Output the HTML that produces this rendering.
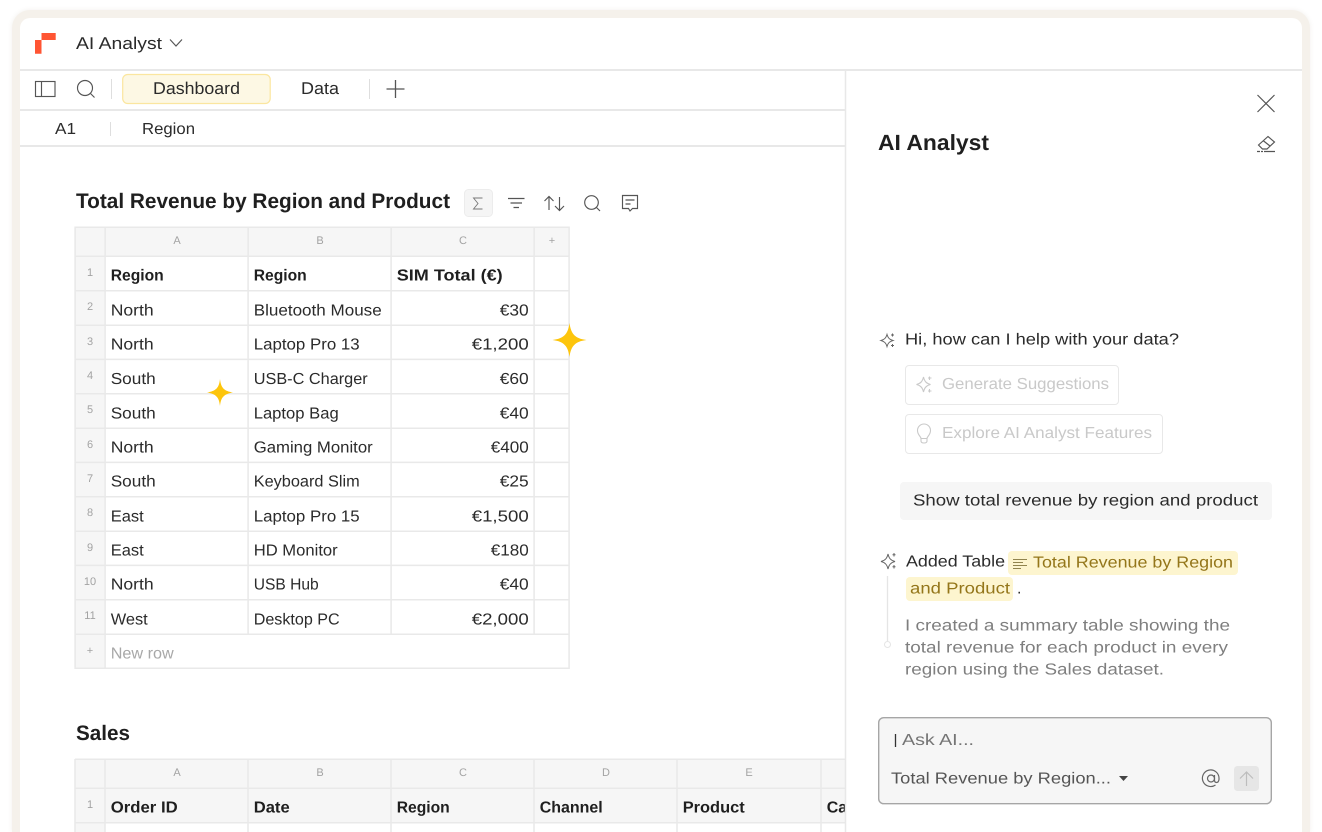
<!DOCTYPE html>
<html><head><meta charset="utf-8">
<style>
html,body{margin:0;padding:0;width:1322px;height:832px;overflow:hidden;background:#fff}
.wrap{position:relative;width:1322px;height:832px;overflow:hidden;background:#fff}
.ring{position:absolute;left:12px;top:10px;width:1298px;height:822px;background:#f5f1eb;border-radius:18px 18px 0 0;box-shadow:0 0 5px rgba(120,100,70,.10)}
svg{position:absolute;left:0;top:0;display:block}
text{font-family:"Liberation Sans",sans-serif;font-size:16px;fill:#2b2b2b;text-rendering:geometricPrecision}
.b{font-weight:700;fill:#1f1f1f}
.h{font-size:11px;fill:#a3a3a3;text-anchor:middle}
.n{font-size:11px;fill:#a3a3a3;text-anchor:middle}
.t{font-size:21px;font-weight:700;fill:#1f1f1f}
.g{fill:#c9c9c9;font-size:16px}
.p{fill:#7f7f7f}
.y{fill:#94761a}
.l{stroke:#e9e9e9;stroke-width:1.500;fill:none}
.i{stroke:#555;stroke-width:1.150;fill:none}
</style></head><body>
<div class="wrap">
<div class="ring"></div>
<svg width="1322" height="832" viewBox="0 0 1322 832">
<path d="M20 832V28a10 10 0 0 1 10-10H1292a10 10 0 0 1 10 10V832Z" fill="#fff"/>

<!-- top bars -->
<path d="M35 40h6.500v13.700h-6.500zM41.500 33h14.200v7h-14.200z" fill="#ff5533"/>
<text x="76" y="49" style="font-size:17px" textLength="86" lengthAdjust="spacingAndGlyphs">AI Analyst</text>
<path class="i" stroke-width="1" d="M170 39.500l6 6.500 6-6.500"/>
<path d="M20 70H1302" stroke="#e8e8e8" stroke-width="2"/>
<path d="M20 110H845M20 146H845" stroke="#e8e8e8" stroke-width="2"/>

<rect class="i" x="35.500" y="81.500" width="19.500" height="15"/>
<path class="i" d="M41.500 81.500V96.500"/>
<circle class="i" cx="85" cy="88" r="7.500"/>
<path class="i" d="M90.500 93.500L94.500 97.500"/>
<path d="M111.500 79V99M369.500 79V99M110.500 122V136" stroke="#dedede" stroke-width="1"/>
<rect x="122.700" y="74.500" width="147.500" height="29" rx="5" fill="#fdf8e4" stroke="#fbe69f" stroke-width="1.200"/>
<text x="153" y="94" style="font-size:17px" textLength="87" lengthAdjust="spacingAndGlyphs">Dashboard</text>
<text x="301" y="94" style="font-size:17px" textLength="38" lengthAdjust="spacingAndGlyphs">Data</text>
<path d="M386.500 89H404.500M395.500 80V98" stroke="#555" stroke-width="1.300"/>
<text x="55" y="134" textLength="21" lengthAdjust="spacingAndGlyphs">A1</text>
<text x="142" y="134" textLength="53" lengthAdjust="spacingAndGlyphs">Region</text>

<!-- title toolbar -->
<text class="t" x="76" y="208" textLength="374" lengthAdjust="spacingAndGlyphs">Total Revenue by Region and Product</text>
<rect x="464.500" y="189.500" width="28" height="27" rx="4" fill="#f5f5f5" stroke="#ececec"/>
<path d="M482.500 198h-9l4.500 5.500-4.500 5.500h9" fill="none" stroke="#777" stroke-width=".9"/>
<path class="i" d="M508 198.500h16.500M510.500 203h11.500M513.500 207.500h5.500"/>
<path class="i" d="M549 210V196.500M544.500 201l4.500-4.500 4.500 4.500M559.500 197V210.500M555 206l4.500 4.500 4.500-4.500"/>
<circle class="i" cx="591.500" cy="202.500" r="6.800"/>
<path class="i" d="M596.500 207.500L600 211"/>
<path class="i" d="M622.500 195.500h15v13h-5l-2.500 2.500-1.500-2.500h-6zM625.500 200h9M625.500 204h5"/>

<!-- table 1 -->
<g transform="translate(-.4,-.3)">
<rect x="75" y="227" width="494" height="29" fill="#f6f6f6"/>
<rect x="75" y="256" width="30" height="412" fill="#f6f6f6"/>
<path class="l" d="M75.500 227.500H569.500V668.500H75.500ZM105.500 227V668M248.500 227V634M391.500 227V634M534.500 227V634M75 256.500H569M75 291H569M75 325.500H569M75 359.700H569M75 394H569M75 428.500H569M75 462.700H569M75 497H569M75 531.500H569M75 565.700H569M75 600H569M75 634.500H569"/>
</g>
<text class="h" x="177" y="244">A</text><text class="h" x="320" y="244">B</text><text class="h" x="463" y="244">C</text><text class="h" x="552" y="244">+</text>
<text class="n" x="90" y="276">1</text><text class="n" x="90" y="310">2</text><text class="n" x="90" y="345">3</text><text class="n" x="90" y="379">4</text><text class="n" x="90" y="413">5</text><text class="n" x="90" y="448">6</text><text class="n" x="90" y="482">7</text><text class="n" x="90" y="516">8</text><text class="n" x="90" y="551">9</text><text class="n" x="90" y="585">10</text><text class="n" x="90" y="619">11</text><text class="n" x="90" y="654">+</text>

<g transform="translate(-.3,-.6)">
<text class="b" x="111" y="281" textLength="53" lengthAdjust="spacingAndGlyphs">Region</text><text class="b" x="254" y="281" textLength="53" lengthAdjust="spacingAndGlyphs">Region</text><text class="b" x="397" y="281" textLength="106" lengthAdjust="spacingAndGlyphs">SIM Total (€)</text>
<text x="111" y="316" textLength="43" lengthAdjust="spacingAndGlyphs">North</text><text x="254" y="316" textLength="128" lengthAdjust="spacingAndGlyphs">Bluetooth Mouse</text><text x="500" y="316" textLength="29" lengthAdjust="spacingAndGlyphs">€30</text>
<text x="111" y="350" textLength="43" lengthAdjust="spacingAndGlyphs">North</text><text x="254" y="350" textLength="106" lengthAdjust="spacingAndGlyphs">Laptop Pro 13</text><text x="472" y="350" textLength="57" lengthAdjust="spacingAndGlyphs">€1,200</text>
<text x="111" y="384.500" textLength="45" lengthAdjust="spacingAndGlyphs">South</text><text x="254" y="384.500" textLength="114" lengthAdjust="spacingAndGlyphs">USB-C Charger</text><text x="500" y="384.500" textLength="29" lengthAdjust="spacingAndGlyphs">€60</text>
<text x="111" y="419" textLength="45" lengthAdjust="spacingAndGlyphs">South</text><text x="254" y="419" textLength="85" lengthAdjust="spacingAndGlyphs">Laptop Bag</text><text x="500" y="419" textLength="29" lengthAdjust="spacingAndGlyphs">€40</text>
<text x="111" y="453" textLength="43" lengthAdjust="spacingAndGlyphs">North</text><text x="254" y="453" textLength="119" lengthAdjust="spacingAndGlyphs">Gaming Monitor</text><text x="491" y="453" textLength="38" lengthAdjust="spacingAndGlyphs">€400</text>
<text x="111" y="487" textLength="45" lengthAdjust="spacingAndGlyphs">South</text><text x="254" y="487" textLength="106" lengthAdjust="spacingAndGlyphs">Keyboard Slim</text><text x="500" y="487" textLength="29" lengthAdjust="spacingAndGlyphs">€25</text>
<text x="111" y="522" textLength="33" lengthAdjust="spacingAndGlyphs">East</text><text x="254" y="522" textLength="106" lengthAdjust="spacingAndGlyphs">Laptop Pro 15</text><text x="472" y="522" textLength="57" lengthAdjust="spacingAndGlyphs">€1,500</text>
<text x="111" y="556" textLength="33" lengthAdjust="spacingAndGlyphs">East</text><text x="254" y="556" textLength="84" lengthAdjust="spacingAndGlyphs">HD Monitor</text><text x="491" y="556" textLength="38" lengthAdjust="spacingAndGlyphs">€180</text>
<text x="111" y="590" textLength="43" lengthAdjust="spacingAndGlyphs">North</text><text x="254" y="590" textLength="65" lengthAdjust="spacingAndGlyphs">USB Hub</text><text x="500" y="590" textLength="29" lengthAdjust="spacingAndGlyphs">€40</text>
<text x="111" y="625" textLength="37" lengthAdjust="spacingAndGlyphs">West</text><text x="254" y="625" textLength="86" lengthAdjust="spacingAndGlyphs">Desktop PC</text><text x="472" y="625" textLength="57" lengthAdjust="spacingAndGlyphs">€2,000</text>
<text x="111" y="659" style="fill:#a8a8a8" textLength="63" lengthAdjust="spacingAndGlyphs">New row</text>
</g>

<!-- stars -->
<path d="M569.500 323C571 334 575 338.500 586.500 340C575 341.500 571 346 569.500 357C568 346 564 341.500 552.500 340C564 338.500 568 334 569.500 323Z" fill="#fdc50c"/>
<path d="M220 379C221 388 224 391 233 392.500C224 394 221 397 220 406C219 397 216 394 207 392.500C216 391 219 388 220 379Z" fill="#fdc50c"/>

<!-- sales -->
<text class="t" x="76" y="740" textLength="54" lengthAdjust="spacingAndGlyphs">Sales</text>
<rect x="75" y="759" width="770" height="64" fill="#f6f6f6"/>
<rect x="75" y="823" width="30" height="9" fill="#f6f6f6"/>
<path class="l" d="M75 759.200H845M75 759V832M105 759V832M248 759V832M391 759V832M534 759V832M677 759V832M821 759V832M75 788.200H845M75 822.700H845"/>
<text class="h" x="177" y="776">A</text><text class="h" x="320" y="776">B</text><text class="h" x="463" y="776">C</text><text class="h" x="606" y="776">D</text><text class="h" x="749" y="776">E</text>
<text class="n" x="90" y="808">1</text>
<g transform="translate(-.3,-.6)">
<text class="b" x="111" y="813" textLength="67" lengthAdjust="spacingAndGlyphs">Order ID</text><text class="b" x="254" y="813" textLength="36" lengthAdjust="spacingAndGlyphs">Date</text><text class="b" x="397" y="813" textLength="53" lengthAdjust="spacingAndGlyphs">Region</text><text class="b" x="540" y="813" textLength="63" lengthAdjust="spacingAndGlyphs">Channel</text><text class="b" x="683" y="813" textLength="62" lengthAdjust="spacingAndGlyphs">Product</text><text class="b" x="827" y="813">Ca</text>
</g>

<!-- right panel -->
<rect x="845" y="71" width="457" height="761" fill="#fff"/>
<path d="M845.500 70V832" stroke="#e8e8e8" stroke-width="1.500"/>
<path class="i" d="M1257.500 95L1274.500 112M1274.500 95L1257.500 112"/>
<text x="878" y="150" class="t" style="font-size:22px" textLength="111" lengthAdjust="spacingAndGlyphs">AI Analyst</text>
<path class="i" d="M1258.500 145L1268 136.500l6.500 5.500-7.500 7h-4.500zM1263 140.500l7 5.500"/>
<path d="M1257 151.500h3M1261 151.500h2M1264 151.500h11" stroke="#555" stroke-width="1.200"/>

<path d="M887 334.500C888 338 889.500 339.500 893 340.500C889.500 341.500 888 343 887 346.500C886 343 884.500 341.500 881 340.500C884.500 339.500 886 338 887 334.500ZM892.500 333.500v3M891 335h3M892.500 344v3M891 345.500h3" fill="none" stroke="#666" stroke-width="1"/>
<text x="905" y="344.500" textLength="274" lengthAdjust="spacingAndGlyphs">Hi, how can I help with your data?</text>

<rect x="905.500" y="365.500" width="213" height="39" rx="3.500" fill="#fff" stroke="#e8e8e8"/>
<path d="M923.500 377C924.500 381.500 926.500 383.500 930.500 384.500C926.500 385.500 924.500 387.500 923.500 392C922.500 387.500 920.500 385.500 916.500 384.500C920.500 383.500 922.500 381.500 923.500 377ZM929.500 376.500v3.500M928 378h3.500M929.500 389v3.500M928 391h3.500" fill="none" stroke="#c9c9c9" stroke-width="1.100"/>
<text class="g" x="942" y="389" textLength="167" lengthAdjust="spacingAndGlyphs">Generate Suggestions</text>
<rect x="905.500" y="414.500" width="257" height="39" rx="3.500" fill="#fff" stroke="#e8e8e8"/>
<path d="M921 438.500c0-2-3.500-3.500-3.500-8a6.500 6.500 0 0 1 13 0c0 4.500-3.500 6-3.500 8zM921 438.500v2.500q0 2 3 2t3-2v-2.500" fill="none" stroke="#c9c9c9" stroke-width="1.100"/>
<text class="g" x="942" y="438" textLength="210" lengthAdjust="spacingAndGlyphs">Explore AI Analyst Features</text>

<rect x="900" y="482" width="372" height="38" rx="4" fill="#f6f6f6"/>
<text x="913" y="505.500" textLength="345" lengthAdjust="spacingAndGlyphs">Show total revenue by region and product</text>

<path d="M888 554C889 558.500 891 560.500 895 561.500C891 562.500 889 564.500 888 569C887 564.500 885 562.500 881 561.500C885 560.500 887 558.500 888 554ZM894 553v3.500M892.500 554.700h3M894 565v3.500M892.500 566.700h3" fill="none" stroke="#666" stroke-width="1"/>
<path d="M887.500 576V641" stroke="#e5e5e5" stroke-width="1.300"/>
<circle cx="887.500" cy="644.500" r="3" fill="#fff" stroke="#e5e5e5"/>
<text x="906" y="566.500" textLength="99" lengthAdjust="spacingAndGlyphs">Added Table</text>
<rect x="1008" y="551" width="230" height="24" rx="4" fill="#fdf5cf"/>
<rect x="906" y="577" width="107" height="24" rx="4" fill="#fdf5cf"/>
<path d="M1013 559.500h14M1013 562.500h10M1013 565.500h14M1013 568.500h8" stroke="#6e5f25" stroke-width=".8"/>
<text class="y" x="1033" y="567.500" textLength="200" lengthAdjust="spacingAndGlyphs">Total Revenue by Region</text>
<text class="y" x="910" y="593.500" textLength="100" lengthAdjust="spacingAndGlyphs">and Product</text>
<text x="1017" y="593.500">.</text>
<text class="p" x="905" y="630.500" textLength="325" lengthAdjust="spacingAndGlyphs">I created a summary table showing the</text>
<text class="p" x="905" y="652.500" textLength="323" lengthAdjust="spacingAndGlyphs">total revenue for each product in every</text>
<text class="p" x="905" y="674.500" textLength="259" lengthAdjust="spacingAndGlyphs">region using the Sales dataset.</text>

<rect x="878.700" y="717.700" width="392.600" height="86" rx="5" fill="#f6f6f6" stroke="#a6a6a6" stroke-width="1.400"/>
<path d="M895.500 734V747" stroke="#333" stroke-width="1.300"/>
<text x="902" y="745" style="fill:#757575" textLength="72" lengthAdjust="spacingAndGlyphs">Ask AI...</text>
<text x="891" y="783.500" style="fill:#555" textLength="220" lengthAdjust="spacingAndGlyphs">Total Revenue by Region...</text>
<path d="M1119 776h9l-4.500 5z" fill="#444"/>
<circle cx="1211" cy="778.500" r="3.500" fill="none" stroke="#666" stroke-width="1.200"/>
<path d="M1214.500 775v5q0 2.500 2 2.500t2.500-3v-1.500a8.300 8.300 0 1 0-3.500 7" fill="none" stroke="#666" stroke-width="1.200"/>
<rect x="1234" y="766" width="25" height="25" rx="3.500" fill="#e6e6e6"/>
<path d="M1246.500 786V772M1240 778.500l6.500-6.500 6.500 6.500" fill="none" stroke="#bdbdbd" stroke-width="1.200"/>
</svg>
</div>
</body></html>
